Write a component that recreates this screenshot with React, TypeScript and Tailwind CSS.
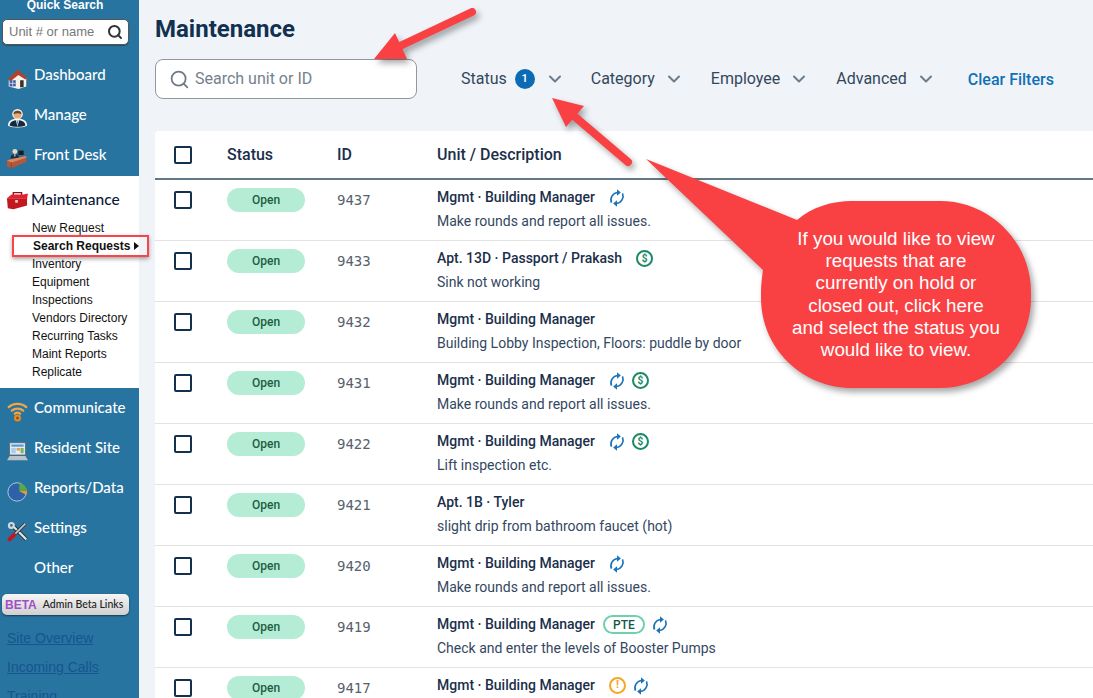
import type { ReactNode } from 'react';
import { ChevronDown, Search } from 'lucide-react';

type Flag = 'sync' | 'money' | 'pte' | 'warn';

interface Request {
  id: string;
  unit: string;
  description: string;
  flags: Flag[];
}

const requests: Request[] = [
  { id: '9437', unit: 'Mgmt · Building Manager', description: 'Make rounds and report all issues.', flags: ['sync'] },
  { id: '9433', unit: 'Apt. 13D · Passport / Prakash', description: 'Sink not working', flags: ['money'] },
  { id: '9432', unit: 'Mgmt · Building Manager', description: 'Building Lobby Inspection, Floors: puddle by door', flags: [] },
  { id: '9431', unit: 'Mgmt · Building Manager', description: 'Make rounds and report all issues.', flags: ['sync', 'money'] },
  { id: '9422', unit: 'Mgmt · Building Manager', description: 'Lift inspection etc.', flags: ['sync', 'money'] },
  { id: '9421', unit: 'Apt. 1B · Tyler', description: 'slight drip from bathroom faucet (hot)', flags: [] },
  { id: '9420', unit: 'Mgmt · Building Manager', description: 'Make rounds and report all issues.', flags: ['sync'] },
  { id: '9419', unit: 'Mgmt · Building Manager', description: 'Check and enter the levels of Booster Pumps', flags: ['pte', 'sync'] },
  { id: '9417', unit: 'Mgmt · Building Manager', description: 'Make rounds and report all issues.', flags: ['warn', 'sync'] },
];

const maintenanceLinks = ['New Request', 'Search Requests', 'Inventory', 'Equipment', 'Inspections', 'Vendors Directory', 'Recurring Tasks', 'Maint Reports', 'Replicate'];

function IconBox({ children }: { children: ReactNode }) {
  return (
    <svg viewBox="0 0 24 24" className="h-[21px] w-[21px] shrink-0">
      {children}
    </svg>
  );
}

const HouseIcon = () => (
  <IconBox>
    <path d="M2 13 9 6l13 5v10l-9 3-11-3z" fill="#f6f3ea" />
    <path d="M1 13 12 2l11 9-2 2-8-5-9 7z" fill="#b5402a" />
    <rect x="3" y="14" width="7" height="7" fill="#3d5fa8" />
    <path d="M3 17.5h7M6.5 14v7" stroke="#f6f3ea" strokeWidth="0.8" />
    <rect x="15" y="14" width="4" height="8" fill="#3a3026" />
  </IconBox>
);

const ManagerIcon = () => (
  <IconBox>
    <path d="M1 20c0-5 5-8 11-8s11 3 11 8c-3 3-19 3-22 0z" fill="#f4f6f8" />
    <path d="M3 20c0-4 4-6 9-6s9 2 9 6c-3 2-15 2-18 0z" fill="#16283c" />
    <circle cx="12" cy="7" r="6" fill="#f4f6f8" />
    <circle cx="12" cy="7.5" r="4.6" fill="#e6ad78" />
    <path d="M7.5 7c-.5-5 9.500-5 9 0-3-1.500-6-1.500-9 0z" fill="#6b4420" />
    <path d="m10 14 2 7 2-7z" fill="#e8edf2" />
    <path d="m11.300 15 .7 5 .7-5z" fill="#2f6fb2" />
  </IconBox>
);

const DeskIcon = () => (
  <IconBox>
    <circle cx="9" cy="4" r="2.800" fill="#e8d8c8" />
    <path d="M4 12c0-4 2-5 5-5s5 1 5 5z" fill="#22303c" />
    <path d="M8 7.500h2l-1 3z" fill="#f4f4f4" />
    <rect x="13" y="3" width="6" height="5" fill="#1c1c1c" />
    <path d="M0 14 22 9v7L5 23l-5-2z" fill="#b4573a" />
    <path d="M0 14 5 16.500 22 11V9z" fill="#d98a62" />
    <path d="M5 16.500V23" stroke="#8b3f28" strokeWidth="0.800" />
  </IconBox>
);

const ToolboxIcon = () => (
  <svg viewBox="0 0 24 20" className="h-[20px] w-[22px] shrink-0">
    <path d="M8 5V2h9v3" fill="none" stroke="#8f1018" strokeWidth="1.5" />
    <path d="M1 8 6 4h13l5-1-1 5z" fill="#e0232e" />
    <path d="M1 8h21l1-1v9l-15 4-6-1z" fill="#c3161f" />
    <rect x="10" y="10" width="3" height="3" fill="#e8c3c3" />
  </svg>
);

const WifiIcon = () => (
  <IconBox>
    <g fill="none" stroke="#f0a648" strokeWidth="2.600" strokeLinecap="round">
      <path d="M2 7c5-5 15-5 20 0" />
      <path d="M5.500 11c3.500-3.200 9.500-3.200 13 0" />
      <path d="M9 14.500c1.800-1.400 4.200-1.400 6 0" />
    </g>
    <circle cx="12" cy="19.500" r="4" fill="#e58a24" />
    <circle cx="12" cy="19.500" r="1.500" fill="#8a4a12" />
  </IconBox>
);

const LaptopIcon = () => (
  <IconBox>
    <rect x="3" y="2" width="18" height="14" fill="#e6ebef" stroke="#5d6a75" />
    <rect x="5" y="4" width="14" height="2.500" fill="#4f9bd9" />
    <rect x="5" y="8" width="5" height="6" fill="#a8cdea" />
    <rect x="11" y="8" width="4" height="3" fill="#e0a060" />
    <rect x="15.500" y="8" width="3.500" height="6" fill="#74b85f" />
    <path d="M3 17h18l3 5H0z" fill="#bcc2c7" />
  </IconBox>
);

const PieIcon = () => (
  <IconBox>
    <circle cx="11.500" cy="12.500" r="10.500" fill="#2d62a8" stroke="#e6eef5" strokeWidth="0.800" />
    <path d="M14 2.500A10.500 10.500 0 0 1 23 11.500H14z" fill="#58a847" />
    <path d="M14 11.500h9a10.500 10.500 0 0 1-1 4.500z" fill="#e8943a" />
  </IconBox>
);

const ToolsIcon = () => (
  <IconBox>
    <path d="m5 4 17 17" stroke="#23282c" strokeWidth="4.500" />
    <path d="m5 4 17 17" stroke="#dfe2e4" strokeWidth="2.500" />
    <path d="M21 3 3 21" stroke="#23282c" strokeWidth="3.500" />
    <path d="M21 3 9 15" stroke="#c4c8cb" strokeWidth="2" />
    <path d="M8 16 3 21" stroke="#c3161f" strokeWidth="4.500" strokeLinecap="round" />
    <circle cx="5" cy="5" r="4" fill="#d5d8da" />
    <circle cx="5" cy="5" r="1.500" fill="#2874a0" />
  </IconBox>
);

function SyncIcon() {
  return (
    <svg viewBox="0 0 24 24" className="h-[22px] w-[22px] text-[#1a73bb]">
      <g fill="none" stroke="currentColor" strokeWidth="1.800">
        <path d="M6 17A8 8 0 0 1 12.500 6" />
        <path d="M18 7A8 8 0 0 1 11.500 18" />
      </g>
      <path d="M12 2.500l4.200 3.500-4.200 3.500zM12 14.500l-4.200 3.500 4.200 3.500z" fill="currentColor" />
    </svg>
  );
}

function NavItem({ label, icon }: { label: string; icon?: ReactNode }) {
  return (
    <div className="flex h-10 shrink-0 items-center pl-[7px] font-['Lato',sans-serif] text-[15px] font-medium text-white">
      <span className="flex w-[27px] items-center pt-[6px]">{icon}</span>
      <span className="pb-[2px]">{label}</span>
    </div>
  );
}

function Sidebar() {
  return (
    <aside className="flex h-[698px] w-[139px] shrink-0 flex-col overflow-hidden bg-[#2874a0] font-['Liberation_Sans',sans-serif]">
      <div className="h-[19px] w-[130px] shrink-0 text-center text-[12px] leading-[10px] font-bold text-white">Quick Search</div>
      <div className="ml-[2px] flex h-[26px] w-[127px] shrink-0 items-center justify-between rounded-[5px] border border-[#555] bg-white pr-[5px] pl-[6px] shadow-[0_1px_1px_rgba(0,0,0,0.3)]">
        <span className="text-[13px] text-[#777]">Unit # or name</span>
        <Search size={16} strokeWidth={3} className="text-[#333]" />
      </div>
      <div className="mt-[10px] shrink-0">
        <NavItem label="Dashboard" icon={<HouseIcon />} />
        <NavItem label="Manage" icon={<ManagerIcon />} />
        <NavItem label="Front Desk" icon={<DeskIcon />} />
      </div>
      <div className="mt-px shrink-0 bg-white pb-[7px]">
        <div className="flex h-[43px] items-end pb-[8px] pl-[6px] font-['Lato',sans-serif] text-[15.5px] font-medium text-[#0a1a3a]">
          <span className="flex w-[25px] items-center pb-px">
            <ToolboxIcon />
          </span>
          <span>Maintenance</span>
        </div>
        {maintenanceLinks.map((link) => (
          <div
            key={link}
            className={
              link === 'Search Requests'
                ? 'flex h-[18px] items-center pl-[33px] text-[12px] font-bold whitespace-nowrap text-[#111]'
                : 'flex h-[18px] items-center pl-[32px] text-[12px] whitespace-nowrap text-[#111]'
            }
          >
            {link}
            {link === 'Search Requests' && <span className="ml-[4px] h-0 w-0 border-y-[4px] border-l-[5px] border-y-transparent border-l-[#111]" />}
          </div>
        ))}
      </div>
      <NavItem label="Communicate" icon={<WifiIcon />} />
      <NavItem label="Resident Site" icon={<LaptopIcon />} />
      <NavItem label="Reports/Data" icon={<PieIcon />} />
      <NavItem label="Settings" icon={<ToolsIcon />} />
      <NavItem label="Other" />
      <div className="mt-[6px] ml-[2px] flex h-[21px] w-[127px] shrink-0 items-center rounded-[5px] bg-gradient-to-b from-[#f6f6f6] to-[#cfcfcf] pl-[3px] shadow-[0_1px_2px_rgba(0,0,0,0.5)]">
        <span className="text-[12px] font-bold text-[#a24fc4]">BETA</span>
        <span className="ml-[6px] font-['Lato',sans-serif] text-[10.5px] font-medium text-[#222]">Admin Beta Links</span>
      </div>
      <div className="mt-[9px] flex shrink-0 flex-col pl-[7px] text-[14px] text-[#16558f] underline">
        <span className="flex h-[29px] shrink-0 items-center">Site Overview</span>
        <span className="flex h-[29px] shrink-0 items-center">Incoming Calls</span>
        <span className="flex h-[29px] shrink-0 items-center">Training</span>
      </div>
    </aside>
  );
}

function FilterButton({ label, count, className }: { label: string; count?: number; className: string }) {
  return (
    <div className={`flex items-center text-[16px] text-[#33475b] ${className}`}>
      <span>{label}</span>
      {count !== undefined && (
        <span className="ml-[8px] flex h-5 w-5 items-center justify-center rounded-full bg-[#0b6cb5] text-[11px] font-semibold text-white">{count}</span>
      )}
      <ChevronDown size={20} strokeWidth={2.4} className={count !== undefined ? 'ml-[10px] text-[#6b7c8c]' : 'ml-[9px] text-[#6b7c8c]'} />
    </div>
  );
}

function Checkbox() {
  return <span className="block h-[18px] w-[18px] rounded-[2px] border-2 border-[#14304f] bg-white" />;
}

function FlagIcon({ flag }: { flag: Flag }) {
  if (flag === 'pte') {
    return <span className="-ml-[3px] flex h-[19px] w-[42px] items-center justify-center rounded-full border-2 border-[#6fd0ac] text-[12px] font-medium text-[#0e5a46]">PTE</span>;
  }
  if (flag === 'sync') {
    return <SyncIcon />;
  }
  if (flag === 'money') {
    return <span className="flex h-[17px] w-[17px] items-center justify-center rounded-full border-2 border-[#1c8a66] text-[10px] font-bold text-[#1c8a66] first:ml-[3px]">$</span>;
  }
  return <span className="flex h-[17px] w-[17px] items-center justify-center rounded-full border-2 border-[#f5a623] text-[11px] font-bold text-[#f5a623] first:ml-[3px]">!</span>;
}

function RequestRow({ request }: { request: Request }) {
  return (
    <div className="grid h-[61px] shrink-0 grid-cols-[72px_110px_100px_1fr] border-b border-[#e2e2e2] pt-[8px]">
      <div className="pt-[3px] pl-[19px]">
        <Checkbox />
      </div>
      <div>
        <span className="flex h-6 w-[78px] items-center justify-center rounded-full bg-[#b5ecd6] text-[12px] font-medium text-[#1d5e43]">Open</span>
      </div>
      <div className="pt-[3px] font-['DejaVu_Sans_Mono',monospace] text-[14px] leading-[18px] text-[#56616c]">{request.id}</div>
      <div>
        <div className="flex h-[19px] items-center">
          <span className="text-[14px] font-medium text-[#1b2f4b]">{request.unit}</span>
          {request.flags.length > 0 && (
            <span className="ml-[11px] flex items-center gap-[4px]">
              {request.flags.map((flag) => (
                <FlagIcon key={flag} flag={flag} />
              ))}
            </span>
          )}
        </div>
        <div className="mt-[5px] text-[14px] leading-[19px] text-[#34475f]">{request.description}</div>
      </div>
    </div>
  );
}

function Annotations() {
  return (
    <>
      <svg viewBox="0 0 1093 698" className="pointer-events-none absolute inset-0 h-[698px] w-[1093px] drop-shadow-[3px_4px_3px_rgba(0,0,0,0.35)]">
        <path d="M472 12 400 46" stroke="#f94144" strokeWidth="8" strokeLinecap="round" fill="none" />
        <path d="M374 59 395 33 407 59z" fill="#f94144" />
        <path d="M628 162 574 116" stroke="#f94144" strokeWidth="8" strokeLinecap="round" fill="none" />
        <path d="M552 98 584 106 566 127z" fill="#f94144" />
        <path
          d="M646 159 797 220C812 207 832 201 852 201H940C990 201 1031 242 1031 292V298C1031 348 990 388 940 388H852C802 388 761 348 761 298V292C761 284 762 277 763 270z"
          fill="#f94144"
        />
      </svg>
      <div className="absolute top-[228px] left-[771px] w-[250px] text-center font-['Liberation_Sans',sans-serif] text-[18.8px] leading-[22.2px] text-white">
        If you would like to view
        <br />
        requests that are
        <br />
        currently on hold or
        <br />
        closed out, click here
        <br />
        and select the status you
        <br />
        would like to view.
      </div>
      <div className="absolute top-[235px] left-[12px] h-[22px] w-[137px] border-2 border-[#f9444a] shadow-[0_2px_4px_rgba(0,0,0,0.35)]" />
    </>
  );
}

export default function App() {
  return (
    <div className="relative flex h-[698px] w-[1093px] overflow-hidden bg-[#f0f4f9] font-['Roboto',sans-serif]">
      <Sidebar />
      <main className="flex min-w-0 flex-1 flex-col pl-4">
        <h1 className="mt-[13px] h-[32px] text-[24px] leading-[32px] font-bold text-[#12304f]">Maintenance</h1>
        <div className="mt-[14px] flex h-[40px] items-center">
          <div className="flex h-[40px] w-[262px] items-center rounded-[8px] border border-[#93979c] bg-white pl-[13px]">
            <Search size={21} strokeWidth={2} className="text-[#6d7a86]" />
            <span className="ml-[5px] text-[16px] text-[#74818d]">Search unit or ID</span>
          </div>
          <FilterButton label="Status" count={1} className="ml-[44px]" />
          <FilterButton label="Category" className="ml-[26px]" />
          <FilterButton label="Employee" className="ml-[27px]" />
          <FilterButton label="Advanced" className="ml-[27px]" />
          <span className="mt-[2px] ml-[32px] text-[16px] font-medium text-[#1170b5]">Clear Filters</span>
        </div>
        <section className="mt-[32px] flex flex-1 flex-col rounded-tl-[4px] bg-white">
          <div className="grid h-[49px] shrink-0 grid-cols-[72px_110px_100px_1fr] items-center border-b-2 border-[#607887] text-[16px] font-medium text-[#1b2f4b]">
            <div className="pl-[19px]">
              <Checkbox />
            </div>
            <div>Status</div>
            <div>ID</div>
            <div>Unit / Description</div>
          </div>
          {requests.map((request) => (
            <RequestRow key={request.id} request={request} />
          ))}
        </section>
      </main>
      <Annotations />
    </div>
  );
}
